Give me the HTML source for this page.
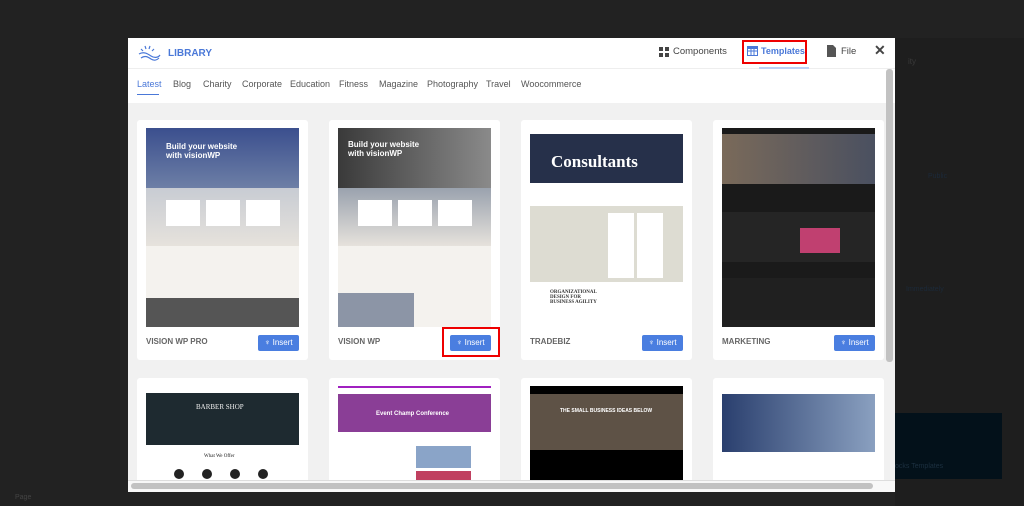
<!DOCTYPE html>
<html><head><meta charset="utf-8"><style>
*{margin:0;padding:0;box-sizing:border-box}
body{width:1024px;height:506px;background:#222;font-family:"Liberation Sans",sans-serif;position:relative;overflow:hidden}
.abs{position:absolute}
.modal{left:128px;top:38px;width:767px;height:454px;background:#f1f1f1;overflow:hidden}
.hdr{left:0;top:0;width:767px;height:31px;background:#fff;border-bottom:1px solid #eee}
.tabs{left:0;top:31px;width:767px;height:34px;background:#fff}
.tab{position:absolute;top:10px;font-size:9px;color:#555}
.card{position:absolute;width:171px;height:240px;background:#fff;border-radius:3px}
.thumb{position:absolute;left:9px;top:8px;width:153px;height:199px;overflow:hidden}
.title{position:absolute;left:9px;top:217px;font-size:8px;font-weight:bold;color:#666}
.btn{position:absolute;right:9px;top:215px;width:41px;height:16px;background:#4a7ee0;border-radius:2px;color:#fff;font-size:8px;line-height:16px;text-align:center}
.b{position:absolute}
</style></head><body>
<div class="abs" style="left:895px;top:38px;width:129px;height:468px;background:#1e1e1e"></div>
<div class="abs" style="left:908px;top:57px;font-size:8px;color:#3a3a3a">ity</div>
<div class="abs" style="left:928px;top:173px;font-size:7px;color:#1c2a3a">Public</div>
<div class="abs" style="left:906px;top:286px;font-size:7px;color:#1c2a3a">Immediately</div>
<div class="abs" style="left:880px;top:413px;width:122px;height:66px;background:#03111a"></div>
<div class="abs" style="left:895px;top:463px;font-size:7px;color:#1c3040">ocks Templates</div>
<div class="abs" style="left:15px;top:494px;font-size:7px;color:#444">Page</div>

<div class="abs modal">
 <div class="abs hdr">
  <svg class="b" style="left:9px;top:7px" width="24" height="17" viewBox="0 0 24 17"><g stroke="#4a78d8" stroke-width="1.2" fill="none"><path d="M2 9c5-3 9 0 12 2s7 2 9-1"/><path d="M4 13c4-3 7-1 10 1s6 1 8-1"/><path d="M6 6l-2-2M9 4l-1-3M12 4l1-3M15 6l2-2"/></g></svg>
  <div class="b" style="left:40px;top:10px;font-size:10px;font-weight:bold;color:#4a78d8">LIBRARY</div>
  <svg class="b" style="left:531px;top:9px" width="10" height="10"><rect x="0" y="0" width="4" height="4" fill="#444"/><rect x="6" y="0" width="4" height="4" fill="#444"/><rect x="0" y="6" width="4" height="4" fill="#444"/><rect x="6" y="6" width="4" height="4" fill="#444"/></svg>
  <div class="b" style="left:545px;top:8px;font-size:9.5px;color:#444">Components</div>
  <div class="b" style="left:614px;top:2px;width:65px;height:24px;border:2px solid #e00"></div>
  <svg class="b" style="left:619px;top:8px" width="11" height="10"><rect x="0.5" y="0.5" width="10" height="9" fill="none" stroke="#4a78d8"/><rect x="1" y="1" width="9" height="2" fill="#4a78d8"/><path d="M1 5h9M4 3v7M7 3v7" stroke="#4a78d8"/></svg>
  <div class="b" style="left:633px;top:8px;font-size:9px;font-weight:bold;color:#4a78d8">Templates</div>
  <div class="b" style="left:631px;top:29px;width:50px;height:2px;background:#bcd0f4"></div>
  <svg class="b" style="left:699px;top:7px" width="9" height="12"><path d="M0 0h6l3 3v9H0z" fill="#555"/></svg>
  <div class="b" style="left:713px;top:8px;font-size:9.5px;color:#444">File</div>
  <div class="b" style="left:746px;top:4px;font-size:14px;font-weight:bold;color:#444">✕</div>
 </div>
 <div class="abs tabs">
  <div class="tab" style="left:9px;color:#4a78d8">Latest</div>
  <div class="b" style="left:9px;top:25px;width:22px;height:1px;background:#4a78d8"></div>
  <div class="tab" style="left:45px">Blog</div>
  <div class="tab" style="left:75px">Charity</div>
  <div class="tab" style="left:114px">Corporate</div>
  <div class="tab" style="left:162px">Education</div>
  <div class="tab" style="left:211px">Fitness</div>
  <div class="tab" style="left:251px">Magazine</div>
  <div class="tab" style="left:299px">Photography</div>
  <div class="tab" style="left:358px">Travel</div>
  <div class="tab" style="left:393px">Woocommerce</div>
 </div>

 <div class="card" style="left:9px;top:82px">
  <div class="thumb" style="background:#f4f2ee">
   <div class="b" style="left:0;top:0;width:153px;height:60px;background:linear-gradient(#3b4f8e,#6d7fa6)"></div>
   <div class="b" style="left:20px;top:14px;font-size:8px;color:#fff;font-weight:bold;line-height:9px">Build your website<br>with visionWP</div>
   <div class="b" style="left:0;top:60px;width:153px;height:58px;background:linear-gradient(#c8ccd3,#e6e2dc)"></div>
   <div class="b" style="left:20px;top:72px;width:34px;height:26px;background:#fff"></div>
   <div class="b" style="left:60px;top:72px;width:34px;height:26px;background:#fff"></div>
   <div class="b" style="left:100px;top:72px;width:34px;height:26px;background:#fff"></div>
   <div class="b" style="left:0;top:170px;width:153px;height:29px;background:#555"></div>
  </div>
  <div class="title">VISION WP PRO</div><div class="btn">♆ Insert</div>
 </div>
 <div class="card" style="left:201px;top:82px">
  <div class="thumb" style="background:#f4f2ee">
   <div class="b" style="left:0;top:0;width:153px;height:60px;background:linear-gradient(90deg,#3a3a3a,#8a8a8a)"></div>
   <div class="b" style="left:10px;top:12px;font-size:8px;color:#fff;font-weight:bold;line-height:9px">Build your website<br>with visionWP</div>
   <div class="b" style="left:0;top:60px;width:153px;height:58px;background:linear-gradient(#9aa2ae,#e6e2dc)"></div>
   <div class="b" style="left:20px;top:72px;width:34px;height:26px;background:#fff"></div>
   <div class="b" style="left:60px;top:72px;width:34px;height:26px;background:#fff"></div>
   <div class="b" style="left:100px;top:72px;width:34px;height:26px;background:#fff"></div>
   <div class="b" style="left:0;top:165px;width:76px;height:34px;background:#8c95a6"></div>
  </div>
  <div class="title">VISION WP</div>
  <div class="b" style="left:113px;top:207px;width:58px;height:30px;border:2px solid #e00"></div>
  <div class="btn">♆ Insert</div>
 </div>
 <div class="card" style="left:393px;top:82px">
  <div class="thumb" style="background:#fff">
   <div class="b" style="left:0;top:6px;width:153px;height:49px;background:#26304a"></div>
   <div class="b" style="left:21px;top:24px;font-family:'Liberation Serif',serif;font-size:17px;color:#fff;font-weight:bold">Consultants</div>
   <div class="b" style="left:0;top:78px;width:153px;height:76px;background:#dddcd2"></div>
   <div class="b" style="left:78px;top:85px;width:26px;height:65px;background:#fff"></div>
   <div class="b" style="left:107px;top:85px;width:26px;height:65px;background:#fff"></div>
   <div class="b" style="left:20px;top:162px;font-family:'Liberation Serif',serif;font-size:5px;color:#333;font-weight:bold">ORGANIZATIONAL<br>DESIGN FOR<br>BUSINESS AGILITY</div>
  </div>
  <div class="title">TRADEBIZ</div><div class="btn">♆ Insert</div>
 </div>
 <div class="card" style="left:585px;top:82px">
  <div class="thumb" style="background:#1a1a1a">
   <div class="b" style="left:0;top:6px;width:153px;height:50px;background:linear-gradient(90deg,#7a6a5a,#4a5060)"></div>
   <div class="b" style="left:0;top:84px;width:153px;height:50px;background:#252525"></div>
   <div class="b" style="left:78px;top:100px;width:40px;height:25px;background:#c04070"></div>
   <div class="b" style="left:0;top:150px;width:153px;height:49px;background:#202020"></div>
  </div>
  <div class="title">MARKETING</div><div class="btn">♆ Insert</div>
 </div>

 <div class="card" style="left:9px;top:340px">
  <div class="thumb" style="background:#fff">
   <div class="b" style="left:0;top:7px;width:153px;height:52px;background:#1e2a30"></div>
   <div class="b" style="left:50px;top:17px;font-family:'Liberation Serif',serif;font-size:7px;color:#eee">BARBER SHOP</div>
   <div class="b" style="left:58px;top:68px;font-family:'Liberation Serif',serif;font-size:5px;color:#222">What We Offer</div>
   <div class="b" style="left:28px;top:83px;width:10px;height:10px;border-radius:50%;background:#222"></div>
   <div class="b" style="left:56px;top:83px;width:10px;height:10px;border-radius:50%;background:#222"></div>
   <div class="b" style="left:84px;top:83px;width:10px;height:10px;border-radius:50%;background:#222"></div>
   <div class="b" style="left:112px;top:83px;width:10px;height:10px;border-radius:50%;background:#222"></div>
  </div>
 </div>
 <div class="card" style="left:201px;top:340px">
  <div class="thumb" style="background:#fff">
   <div class="b" style="left:0;top:0;width:153px;height:2px;background:#a020c0"></div>
   <div class="b" style="left:0;top:8px;width:153px;height:38px;background:#8a3e96"></div>
   <div class="b" style="left:38px;top:25px;font-size:6px;color:#fff;font-weight:bold">Event Champ Conference</div>
   <div class="b" style="left:78px;top:60px;width:55px;height:22px;background:#8aa4c8"></div>
   <div class="b" style="left:78px;top:85px;width:55px;height:10px;background:#c04060"></div>
  </div>
 </div>
 <div class="card" style="left:393px;top:340px">
  <div class="thumb" style="background:#000">
   <div class="b" style="left:0;top:8px;width:153px;height:56px;background:#5e5246"></div>
   <div class="b" style="left:30px;top:22px;font-size:5px;color:#fff;font-weight:bold">THE SMALL BUSINESS IDEAS BELOW</div>
  </div>
 </div>
 <div class="card" style="left:585px;top:340px">
  <div class="thumb" style="background:#fff">
   <div class="b" style="left:0;top:8px;width:153px;height:58px;background:linear-gradient(90deg,#2a3f6e,#8aa0c0)"></div>
  </div>
 </div>

 <div class="abs" style="left:0;top:442px;width:767px;height:12px;background:#f8f8f8;border-top:1px solid #ddd"></div>
 <div class="abs" style="left:3px;top:445px;width:742px;height:6px;background:#c2c2c2;border-radius:3px"></div>
 <div class="abs" style="left:758px;top:31px;width:7px;height:293px;background:#c2c2c2;border-radius:3px"></div>
</div>
</body></html>
